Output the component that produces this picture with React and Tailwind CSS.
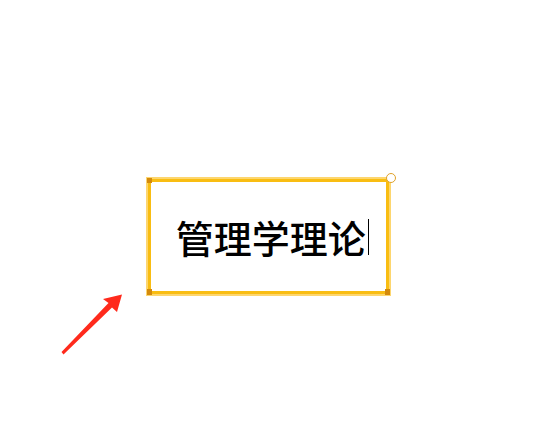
export default function App() {
  return (
    <div className="relative w-[552px] h-[437px] bg-white overflow-hidden">
      <div className="pt-[177px] pl-[146px]">
        <div className="relative w-[245px] h-[119px] border-2 border-[#fdd66e]">
          <div className="h-full border-[3px] border-[#f9bd12] flex items-center justify-center pl-2">
            <span
              className="text-[38px] leading-none font-medium text-black"
              style={{ fontFamily: '"Noto Sans CJK SC", sans-serif' }}
            >
              管理学理论
            </span>
            <span className="ml-[2px] w-[1.5px] h-[36px] bg-black" />
          </div>
          {/* handles */}
          <span className="absolute -left-[1px] -top-[1px] w-[5px] h-[5px] bg-[#d48a0c]" />
          <span className="absolute -left-[1px] -bottom-[1px] w-[5px] h-[6px] bg-[#d48a0c]" />
          <span className="absolute -right-[1px] -bottom-[1px] w-[5px] h-[6px] bg-[#d48a0c]" />
          <span className="absolute -right-[7px] -top-[6px] w-[10px] h-[10px] rounded-full bg-white border border-[#e0a22a]" />
        </div>
      </div>

      <svg className="absolute left-0 top-0" width="552" height="437" viewBox="0 0 552 437">
        <path
          d="M61.5 352 L108.5 303 L103 299 L122 294.5 L117 312 L112 307.5 L63.5 354.5 Z"
          fill="#ff2a1c"
        />
      </svg>
    </div>
  );
}
